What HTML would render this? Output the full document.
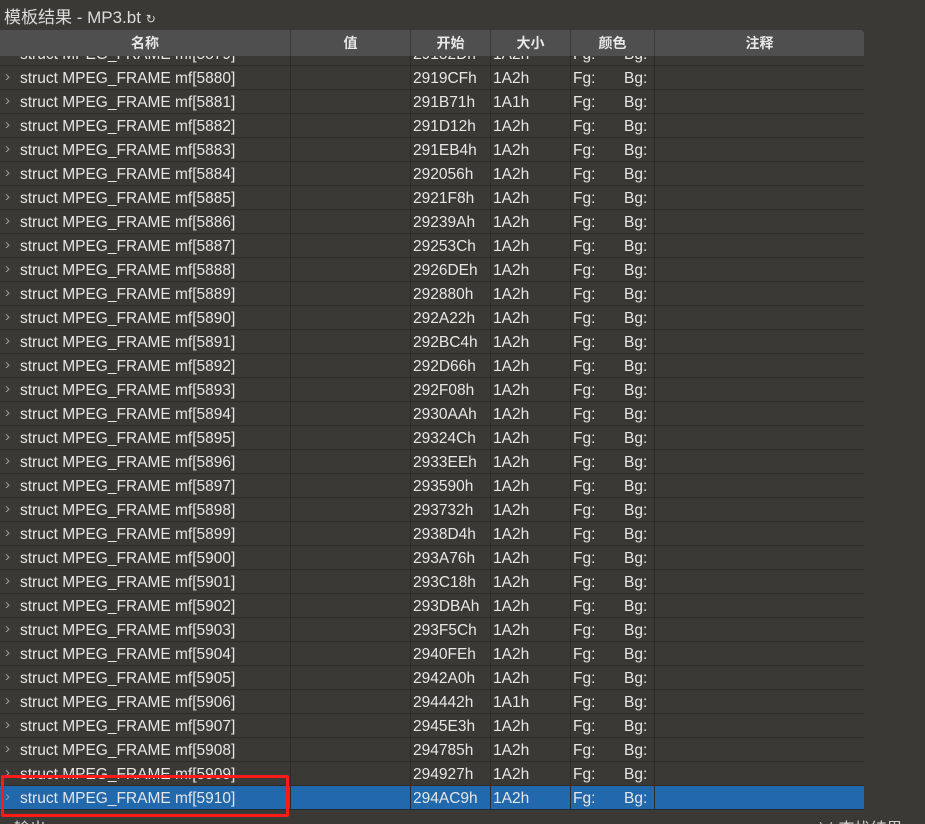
<!DOCTYPE html>
<html><head><meta charset="utf-8">
<style>
*{margin:0;padding:0;box-sizing:border-box}
html,body{width:925px;height:824px;overflow:hidden}
body{background:#3b3936;font-family:"Liberation Sans","Noto Sans CJK SC",sans-serif;color:#e6e6e6;position:relative}
.title{position:absolute;left:4px;top:3px;font-size:17px;color:#dcdcdc;white-space:nowrap}
.hdr{position:absolute;left:0;top:30px;width:864px;height:26px;background:#4f4f4f;border-top-right-radius:4px}
.hc{position:absolute;top:0;height:26px;line-height:26px;text-align:center;font-size:14px;font-weight:bold;color:#e8e8e8;border-right:1px solid #3b3b3b}
.rows{position:absolute;left:0;top:56px;width:864px;height:754px;overflow:hidden}
.row{position:relative;width:864px;height:24px;border-bottom:1px solid #2c2b29;font-size:15.5px;line-height:26px;color:#e6e6e6}
.row.sel{background:#2268ad;border-bottom:1px solid #1d2a38}
.row span{position:absolute;top:0;height:24px;white-space:nowrap;border-right:1px solid #2c2b29}
.a{left:0;width:291px}
.a i{position:absolute;left:5px;top:-2px;color:#9a9a9a;font-size:15px;font-style:normal}
.a b{position:absolute;left:20px;font-weight:normal}
.v{left:291px;width:120px}
.s{left:411px;width:80px;padding-left:2px}
.z{left:491px;width:80px;padding-left:2px}
.k{left:571px;width:84px;padding-left:2px}
.k em{position:absolute;left:53px;font-style:normal}
.red{position:absolute;left:1px;top:775px;width:288px;height:42px;border:3px solid #ff1a1a;border-radius:2px}
.bot{position:absolute;top:815px;font-size:16px;color:#cfcfcf}
</style></head><body>
<div class="title">模板结果 - MP3.bt <span style="font-size:12px">&#x21BB;</span></div>
<div class="hdr">
<div class="hc" style="left:0;width:291px">名称</div>
<div class="hc" style="left:291px;width:120px">值</div>
<div class="hc" style="left:411px;width:80px">开始</div>
<div class="hc" style="left:491px;width:80px">大小</div>
<div class="hc" style="left:571px;width:84px">颜色</div>
<div class="hc" style="left:655px;width:209px;border-right:none">注释</div>
</div>
<div class="rows"><div style="margin-top:-14px">
<div class="row"><span class="a"><i>›</i><b>struct MPEG_FRAME mf[5879]</b></span><span class="v"></span><span class="s">29182Dh</span><span class="z">1A2h</span><span class="k">Fg:<em>Bg:</em></span></div>
<div class="row"><span class="a"><i>›</i><b>struct MPEG_FRAME mf[5880]</b></span><span class="v"></span><span class="s">2919CFh</span><span class="z">1A2h</span><span class="k">Fg:<em>Bg:</em></span></div>
<div class="row"><span class="a"><i>›</i><b>struct MPEG_FRAME mf[5881]</b></span><span class="v"></span><span class="s">291B71h</span><span class="z">1A1h</span><span class="k">Fg:<em>Bg:</em></span></div>
<div class="row"><span class="a"><i>›</i><b>struct MPEG_FRAME mf[5882]</b></span><span class="v"></span><span class="s">291D12h</span><span class="z">1A2h</span><span class="k">Fg:<em>Bg:</em></span></div>
<div class="row"><span class="a"><i>›</i><b>struct MPEG_FRAME mf[5883]</b></span><span class="v"></span><span class="s">291EB4h</span><span class="z">1A2h</span><span class="k">Fg:<em>Bg:</em></span></div>
<div class="row"><span class="a"><i>›</i><b>struct MPEG_FRAME mf[5884]</b></span><span class="v"></span><span class="s">292056h</span><span class="z">1A2h</span><span class="k">Fg:<em>Bg:</em></span></div>
<div class="row"><span class="a"><i>›</i><b>struct MPEG_FRAME mf[5885]</b></span><span class="v"></span><span class="s">2921F8h</span><span class="z">1A2h</span><span class="k">Fg:<em>Bg:</em></span></div>
<div class="row"><span class="a"><i>›</i><b>struct MPEG_FRAME mf[5886]</b></span><span class="v"></span><span class="s">29239Ah</span><span class="z">1A2h</span><span class="k">Fg:<em>Bg:</em></span></div>
<div class="row"><span class="a"><i>›</i><b>struct MPEG_FRAME mf[5887]</b></span><span class="v"></span><span class="s">29253Ch</span><span class="z">1A2h</span><span class="k">Fg:<em>Bg:</em></span></div>
<div class="row"><span class="a"><i>›</i><b>struct MPEG_FRAME mf[5888]</b></span><span class="v"></span><span class="s">2926DEh</span><span class="z">1A2h</span><span class="k">Fg:<em>Bg:</em></span></div>
<div class="row"><span class="a"><i>›</i><b>struct MPEG_FRAME mf[5889]</b></span><span class="v"></span><span class="s">292880h</span><span class="z">1A2h</span><span class="k">Fg:<em>Bg:</em></span></div>
<div class="row"><span class="a"><i>›</i><b>struct MPEG_FRAME mf[5890]</b></span><span class="v"></span><span class="s">292A22h</span><span class="z">1A2h</span><span class="k">Fg:<em>Bg:</em></span></div>
<div class="row"><span class="a"><i>›</i><b>struct MPEG_FRAME mf[5891]</b></span><span class="v"></span><span class="s">292BC4h</span><span class="z">1A2h</span><span class="k">Fg:<em>Bg:</em></span></div>
<div class="row"><span class="a"><i>›</i><b>struct MPEG_FRAME mf[5892]</b></span><span class="v"></span><span class="s">292D66h</span><span class="z">1A2h</span><span class="k">Fg:<em>Bg:</em></span></div>
<div class="row"><span class="a"><i>›</i><b>struct MPEG_FRAME mf[5893]</b></span><span class="v"></span><span class="s">292F08h</span><span class="z">1A2h</span><span class="k">Fg:<em>Bg:</em></span></div>
<div class="row"><span class="a"><i>›</i><b>struct MPEG_FRAME mf[5894]</b></span><span class="v"></span><span class="s">2930AAh</span><span class="z">1A2h</span><span class="k">Fg:<em>Bg:</em></span></div>
<div class="row"><span class="a"><i>›</i><b>struct MPEG_FRAME mf[5895]</b></span><span class="v"></span><span class="s">29324Ch</span><span class="z">1A2h</span><span class="k">Fg:<em>Bg:</em></span></div>
<div class="row"><span class="a"><i>›</i><b>struct MPEG_FRAME mf[5896]</b></span><span class="v"></span><span class="s">2933EEh</span><span class="z">1A2h</span><span class="k">Fg:<em>Bg:</em></span></div>
<div class="row"><span class="a"><i>›</i><b>struct MPEG_FRAME mf[5897]</b></span><span class="v"></span><span class="s">293590h</span><span class="z">1A2h</span><span class="k">Fg:<em>Bg:</em></span></div>
<div class="row"><span class="a"><i>›</i><b>struct MPEG_FRAME mf[5898]</b></span><span class="v"></span><span class="s">293732h</span><span class="z">1A2h</span><span class="k">Fg:<em>Bg:</em></span></div>
<div class="row"><span class="a"><i>›</i><b>struct MPEG_FRAME mf[5899]</b></span><span class="v"></span><span class="s">2938D4h</span><span class="z">1A2h</span><span class="k">Fg:<em>Bg:</em></span></div>
<div class="row"><span class="a"><i>›</i><b>struct MPEG_FRAME mf[5900]</b></span><span class="v"></span><span class="s">293A76h</span><span class="z">1A2h</span><span class="k">Fg:<em>Bg:</em></span></div>
<div class="row"><span class="a"><i>›</i><b>struct MPEG_FRAME mf[5901]</b></span><span class="v"></span><span class="s">293C18h</span><span class="z">1A2h</span><span class="k">Fg:<em>Bg:</em></span></div>
<div class="row"><span class="a"><i>›</i><b>struct MPEG_FRAME mf[5902]</b></span><span class="v"></span><span class="s">293DBAh</span><span class="z">1A2h</span><span class="k">Fg:<em>Bg:</em></span></div>
<div class="row"><span class="a"><i>›</i><b>struct MPEG_FRAME mf[5903]</b></span><span class="v"></span><span class="s">293F5Ch</span><span class="z">1A2h</span><span class="k">Fg:<em>Bg:</em></span></div>
<div class="row"><span class="a"><i>›</i><b>struct MPEG_FRAME mf[5904]</b></span><span class="v"></span><span class="s">2940FEh</span><span class="z">1A2h</span><span class="k">Fg:<em>Bg:</em></span></div>
<div class="row"><span class="a"><i>›</i><b>struct MPEG_FRAME mf[5905]</b></span><span class="v"></span><span class="s">2942A0h</span><span class="z">1A2h</span><span class="k">Fg:<em>Bg:</em></span></div>
<div class="row"><span class="a"><i>›</i><b>struct MPEG_FRAME mf[5906]</b></span><span class="v"></span><span class="s">294442h</span><span class="z">1A1h</span><span class="k">Fg:<em>Bg:</em></span></div>
<div class="row"><span class="a"><i>›</i><b>struct MPEG_FRAME mf[5907]</b></span><span class="v"></span><span class="s">2945E3h</span><span class="z">1A2h</span><span class="k">Fg:<em>Bg:</em></span></div>
<div class="row"><span class="a"><i>›</i><b>struct MPEG_FRAME mf[5908]</b></span><span class="v"></span><span class="s">294785h</span><span class="z">1A2h</span><span class="k">Fg:<em>Bg:</em></span></div>
<div class="row"><span class="a"><i>›</i><b>struct MPEG_FRAME mf[5909]</b></span><span class="v"></span><span class="s">294927h</span><span class="z">1A2h</span><span class="k">Fg:<em>Bg:</em></span></div>
<div class="row sel"><span class="a"><i>›</i><b>struct MPEG_FRAME mf[5910]</b></span><span class="v"></span><span class="s">294AC9h</span><span class="z">1A2h</span><span class="k">Fg:<em>Bg:</em></span></div>
</div></div>
<div class="red"></div>
<div class="bot" style="left:14px">输出</div>
<div class="bot" style="left:818px">∨ 查找结果</div>
</body></html>
